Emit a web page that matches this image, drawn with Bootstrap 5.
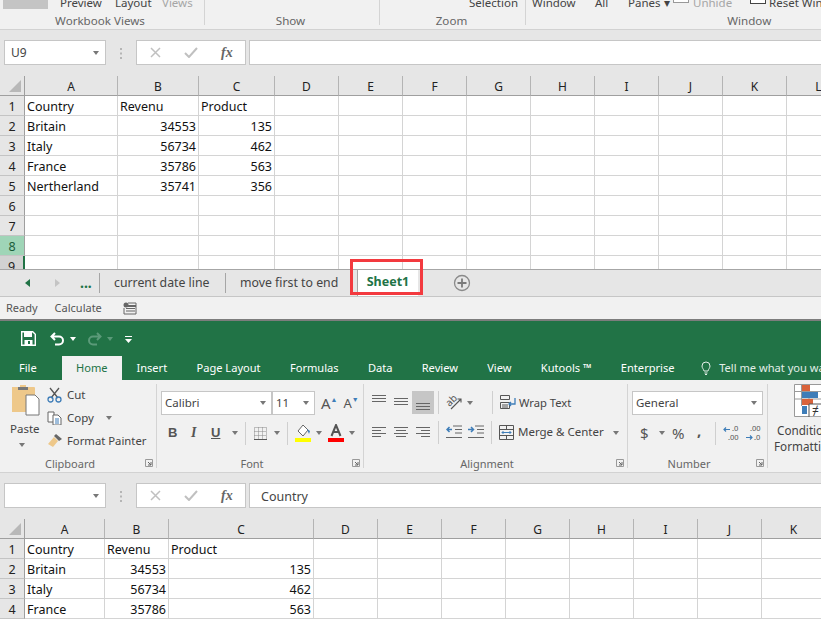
<!DOCTYPE html>
<html lang="en"><head><meta charset="utf-8"><title>Excel</title>
<link href="https://cdn.jsdelivr.net/npm/bootstrap@5.3.0/dist/css/bootstrap.min.css" rel="stylesheet">
<style>
html,body{margin:0;background:#f1f1f1;overflow:hidden}
body{width:821px;height:620px;position:relative;font-family:"Noto Sans","Liberation Sans",sans-serif;font-size:11.5px;color:#444;line-height:14px}
svg{display:block;flex:none}
.xl-stub{height:30px;background:#f1f1f1;border-bottom:1px solid #d2d2d2;overflow:hidden}
.xl-stubgroup{height:25px;border-right:1px solid #d4d4d4;flex:none}
.xl-stubgroup:last-child{border:0;flex:1}
.xl-stubtop{height:10px;margin-top:-4px;white-space:nowrap}
.xl-stubtop span{flex:none}
.xl-dim{color:#a6a6a6}
.xl-shotbox{width:45px;height:9px;background:#c4c4c4;margin:4px 12px 0 3px;flex:none}
.xl-chk{width:16px;height:8px;border:1px solid #999;border-top:0;margin-top:0;flex:none;background:#fff}
.xl-chk2{border-color:#444}
.xl-stublabel{margin-top:8px;text-align:center;color:#666;line-height:14px;font-size:11.6px}
.xl-band{background:#e6e6e6;padding:10px 0 10px 4px;height:46px}
.xl-name{width:102px;height:25px;background:#fff;border:1px solid #c6c6c6;padding:0 6px;line-height:23px;color:#444;font-size:12px}
.xl-grip{width:30px}
.xl-fx{width:110px;height:25px;background:#fff;border:1px solid #c6c6c6}
.xl-input{flex:1;height:25px;background:#fff;border:1px solid #c6c6c6;border-right:0;margin-left:3px;padding-left:11px;line-height:25px;font-size:12.5px;color:#444}
.xl-sheet{background:#fff;overflow:hidden}
.xl-sheet1{height:193px}
.xl-sheet2{height:101px}
.xl-table{table-layout:fixed;border-collapse:separate;border-spacing:0;font-size:12.5px;color:#111}
.xl-table th{background:#e6e6e6;font-weight:400;text-align:center;height:20px;padding:2px 0 0;border-right:1px solid #b4b4b4;border-bottom:1px solid #9f9f9f;color:#222;font-size:12px;line-height:17px}
.xl-table th.xl-rowh{border-right:1px solid #9f9f9f;border-bottom:1px solid #c4c4c4;font-size:12.5px}
.xl-table td{height:20px;padding:2px 2px 0;border-right:1px solid #d4d4d4;border-bottom:1px solid #d4d4d4;line-height:17px;white-space:nowrap;overflow:hidden}
.xl-table td.xl-num{text-align:right}
.xl-table th.xl-corner{position:relative;border-right-color:#9f9f9f}
.xl-corner svg{position:absolute;right:3px;bottom:3px}
.xl-table th.xl-r8{background:#9fd5b7;color:#1b5e3a}
.xl-table th.xl-r9{background:#d2d2d2;border-right:2px solid #217346}
.xl-tabs{height:28px;background:#e6e6e6;border-top:1px solid #a6a6a6;border-bottom:1px solid #c6c6c6;font-size:12.3px;color:#444;position:relative;white-space:nowrap}
.xl-tabsep{width:1px;height:20px;background:#a6a6a6;flex:none}
.xl-active{background:#fff;color:#217346;font-weight:700;width:61px;height:26px;border-left:1px solid #a6a6a6;text-align:center;line-height:24px;margin-left:16px;font-size:12.5px;flex:none}
.xl-status{height:22px;background:#f1f1f1;color:#555;font-size:11px;padding-left:6px}
.xl-divider{height:2px;background:#7d7d7d}
.xl-title{height:35px;background:#217346;padding-left:21px}
.xl-tabrow{height:24px;background:#217346;color:#fff;font-size:11.1px;line-height:24px;white-space:nowrap;overflow:hidden}
.xl-tabrow span{flex:none;padding:0 14.65px}
.xl-tabrow span.xl-file{padding:0 0 0 19px;margin-right:25px}
.xl-tabrow span.xl-home{background:#f1f1f1;color:#217346;padding:0;width:60px;text-align:center;margin-right:0}
.xl-tabrow span.xl-tell{padding:0;color:#e3efe8}
.xl-ribbon{height:93px;background:#f1f1f1;border-bottom:1px solid #d2d2d2;padding-top:4px;overflow:hidden}
.xl-group{height:84px;border-right:1px solid #d4d4d4;flex:none;position:relative;display:flex;flex-direction:column}
.xl-gbody{height:68px;flex:none}
.xl-glabel{text-align:center;color:#666;font-size:11px;line-height:14px;margin-top:5px}
.xl-launch{position:absolute;right:3px;bottom:1px}
.xl-combo{height:24px;background:#fff;border:1px solid #c6c6c6;line-height:22px;padding-left:3px;color:#444;font-size:11.5px;position:relative;flex:none}
.xl-caret{width:0;height:0;border-left:3.5px solid transparent;border-right:3.5px solid transparent;border-top:4px solid #777;flex:none}
.xl-combo .xl-caret{position:absolute;right:5px;top:9px}
.xl-vsep{width:1px;height:23px;background:#cfcfcf;flex:none}
.xl-sel{background:#c6c6c6;width:22px;height:23px;display:flex;align-items:flex-end;justify-content:center;padding-bottom:3px}
.xl-redbox{position:absolute;left:350px;top:259px;width:73px;height:36px;border:3px solid #f33a3f;pointer-events:none}
.xl-b{font-weight:700;font-family:"Liberation Sans",sans-serif;color:#555;font-size:13px;flex:none;line-height:16px}
.xl-i{font-style:italic;font-weight:700;font-family:"Liberation Serif",serif;color:#555;font-size:14px;flex:none}
.xl-u{text-decoration:underline;font-weight:700;font-family:"Liberation Sans",sans-serif;color:#555;font-size:13px;flex:none}
.xl-fxt{font-family:"Liberation Serif",serif;font-style:italic;font-weight:700;color:#666;font-size:14px}
</style></head>
<body>
<!-- window one -->
<div class="xl-stub d-flex">
  <div class="xl-stubgroup" style="width:205px">
    <div class="xl-stubtop d-flex"><i class="xl-shotbox"></i><span style="width:55px">Preview</span><span style="width:47px">Layout</span><span class="xl-dim">Views</span></div>
    <div class="xl-stublabel" style="padding-right:4px">Workbook Views</div>
  </div>
  <div class="xl-stubgroup" style="width:175px">
    <div class="xl-stubtop"></div>
    <div class="xl-stublabel" style="padding-right:3px">Show</div>
  </div>
  <div class="xl-stubgroup" style="width:146px">
    <div class="xl-stubtop d-flex justify-content-end"><span style="margin-right:7px">Selection</span></div>
    <div class="xl-stublabel" style="padding-right:2px">Zoom</div>
  </div>
  <div class="xl-stubgroup">
    <div class="xl-stubtop d-flex"><span style="margin-left:6px;width:63px">Window</span><span style="width:33px">All</span><span style="width:45px">Panes ▾</span><i class="xl-chk" style="margin-top:-1px"></i><span class="xl-dim" style="margin-left:4px;width:57px">Unhide</span><i class="xl-chk xl-chk2"></i><span style="margin-left:3px">Reset Win</span></div>
    <div class="xl-stublabel" style="padding-left:150px">Window</div>
  </div>
</div>
<div class="xl-band d-flex">
  <div class="xl-name d-flex justify-content-between align-items-center"><span>U9</span><i class="xl-caret"></i></div>
  <div class="xl-grip d-flex align-items-center justify-content-center"><svg width="3" height="11"><path d="M0 0h2v2H0zM0 4.500h2v2H0zM0 9h2v2H0z" fill="#b5b5b5"/></svg></div>
  <div class="xl-fx d-flex align-items-center">
    <svg width="11" height="11" style="margin-left:13px"><path d="M1 1l9 9M10 1l-9 9" stroke="#c0c0c0" stroke-width="1.500"/></svg>
    <svg width="14" height="11" style="margin-left:23px"><path d="M1 6l4 4 8-9" fill="none" stroke="#c0c0c0" stroke-width="2"/></svg>
    <span class="xl-fxt" style="margin-left:23px">fx</span>
  </div>
  <div class="xl-input"></div>
</div>
<div class="xl-sheet xl-sheet1">
<table class="xl-table" style="width:851px">
<colgroup><col style="width:25px"><col style="width:93px"><col style="width:81px"><col style="width:76px"><col style="width:64px"><col style="width:64px"><col style="width:64px"><col style="width:64px"><col style="width:64px"><col style="width:64px"><col style="width:64px"><col style="width:64px"><col style="width:64px"></colgroup>
<tr><th class="xl-corner"><svg width="12" height="12"><path d="M12 0v12H0z" fill="#b8b8b8"/></svg></th><th>A</th><th>B</th><th>C</th><th>D</th><th>E</th><th>F</th><th>G</th><th>H</th><th>I</th><th>J</th><th>K</th><th>L</th></tr>
<tr><th class="xl-rowh">1</th><td>Country</td><td>Revenu</td><td>Product</td><td></td><td></td><td></td><td></td><td></td><td></td><td></td><td></td><td></td></tr>
<tr><th class="xl-rowh">2</th><td>Britain</td><td class="xl-num">34553</td><td class="xl-num">135</td><td></td><td></td><td></td><td></td><td></td><td></td><td></td><td></td><td></td></tr>
<tr><th class="xl-rowh">3</th><td>Italy</td><td class="xl-num">56734</td><td class="xl-num">462</td><td></td><td></td><td></td><td></td><td></td><td></td><td></td><td></td><td></td></tr>
<tr><th class="xl-rowh">4</th><td>France</td><td class="xl-num">35786</td><td class="xl-num">563</td><td></td><td></td><td></td><td></td><td></td><td></td><td></td><td></td><td></td></tr>
<tr><th class="xl-rowh">5</th><td>Nertherland</td><td class="xl-num">35741</td><td class="xl-num">356</td><td></td><td></td><td></td><td></td><td></td><td></td><td></td><td></td><td></td></tr>
<tr><th class="xl-rowh">6</th><td></td><td></td><td></td><td></td><td></td><td></td><td></td><td></td><td></td><td></td><td></td><td></td></tr>
<tr><th class="xl-rowh">7</th><td></td><td></td><td></td><td></td><td></td><td></td><td></td><td></td><td></td><td></td><td></td><td></td></tr>
<tr><th class="xl-rowh xl-r8">8</th><td></td><td></td><td></td><td></td><td></td><td></td><td></td><td></td><td></td><td></td><td></td><td></td></tr>
<tr><th class="xl-rowh xl-r9">9</th><td></td><td></td><td></td><td></td><td></td><td></td><td></td><td></td><td></td><td></td><td></td><td></td></tr>
</table>
</div>
<div class="xl-tabs d-flex align-items-center">
  <svg style="margin-left:25px" width="6" height="8"><path d="M5 0v8L0 4z" fill="#217346"/></svg>
  <svg style="margin-left:24px" width="6" height="8"><path d="M0 0v8l5-4z" fill="#c4c4c4"/></svg>
  <b style="margin-left:19px;color:#217346;width:19px;flex:none;font-size:14px">...</b>
  <i class="xl-tabsep"></i>
  <span style="margin-left:14px;width:96px;flex:none">current date line</span>
  <i class="xl-tabsep" style="margin-left:15px"></i>
  <span style="margin-left:14px;width:101px;flex:none">move first to end</span>
  <span class="xl-active">Sheet1</span>
  <svg style="margin-left:35px" width="18" height="18"><circle cx="9" cy="9" r="7.500" fill="none" stroke="#8a8a8a" stroke-width="1.300"/><path d="M9 4.500v9M4.500 9h9" stroke="#7a7a7a" stroke-width="1.800"/></svg>
</div>
<div class="xl-status d-flex align-items-center">
  <span>Ready</span><span style="margin-left:17px">Calculate</span>
  <svg style="margin-left:21px" width="14" height="13"><circle cx="3" cy="3" r="2.500" fill="#666"/><path d="M5 1h8v11H1V6" fill="none" stroke="#666"/><path d="M3 6h9v1H3zM3 8.500h9v1H3z" fill="#666"/><path d="M5 3h8v2H5z" fill="#666"/></svg>
</div>
<div class="xl-divider"></div>
<!-- window two -->
<div class="xl-title d-flex align-items-center">
  <svg width="15" height="15"><path d="M0.700 0.700h11l2.600 2.600v11H0.700z" fill="none" stroke="#fff" stroke-width="1.400"/><path d="M3 1h8v5H3zM3.500 9h8v5h-8z" fill="#fff"/><path d="M7 10h2v3H7z" fill="#217346"/></svg>
  <svg style="margin-left:14px" width="15" height="14"><path d="M5 1L1.500 4.500 5 8M2 4.500h7a4 4 0 0 1 0 8H5" fill="none" stroke="#fff" stroke-width="2"/></svg>
  <i class="xl-caret" style="margin-left:5px;border-top-color:#fff"></i>
  <svg style="margin-left:11px" width="15" height="14"><path d="M10 1l3.500 3.500L10 8M13 4.500H6a4 4 0 0 0 0 8h4" fill="none" stroke="#5b9a79" stroke-width="2"/></svg>
  <i class="xl-caret" style="margin-left:5px;border-top-color:#5b9a79"></i>
  <svg style="margin-left:12px" width="7" height="8"><path d="M0 1h7v1H0zM0 4h7L3.500 8z" fill="#fff"/></svg>
</div>
<div class="xl-tabrow d-flex">
  <span class="xl-file">File</span><span class="xl-home">Home</span><span>Insert</span><span>Page Layout</span><span>Formulas</span><span>Data</span><span>Review</span><span>View</span><span>Kutools ™</span><span>Enterprise</span>
  <svg style="margin:5px 8px 0 12px" width="10" height="14"><path d="M3 10C2.500 8 1 7 1 5a4 4 0 0 1 8 0c0 2-1.500 3-2 5zM3.500 12h3M4 13.500h2" fill="none" stroke="#e3efe8"/></svg>
  <span class="xl-tell">Tell me what you want</span>
</div>
<div class="xl-ribbon d-flex">
  <!-- clipboard -->
  <div class="xl-group" style="width:157px">
    <div class="xl-gbody d-flex">
      <div style="width:47px;padding-left:10px;flex:none">
        <svg width="30" height="32"><path d="M2 3h8V1h6v2h8a1 1 0 0 1 1 1v24H2z" fill="#eec88a"/><path d="M8 3h10v3H8z" fill="#777"/><path d="M16 11h9l4 4v16H16z" fill="#fff" stroke="#777"/></svg>
        <div style="margin-top:6px;font-size:11.5px;color:#444">Paste</div>
        <i class="xl-caret d-block" style="margin:7px 0 0 9px"></i>
      </div>
      <div class="d-flex flex-column">
        <div class="d-flex align-items-center" style="height:22px"><svg width="15" height="16"><path d="M3 1l8 10M12 1L4 11" stroke="#555" stroke-width="1.300"/><circle cx="3.500" cy="12.500" r="2.500" fill="none" stroke="#3e7db8" stroke-width="1.300"/><circle cx="11.500" cy="12.500" r="2.500" fill="none" stroke="#3e7db8" stroke-width="1.300"/></svg><span style="margin-left:5px">Cut</span></div>
        <div class="d-flex align-items-center" style="height:24px"><svg width="15" height="14"><path d="M1 1h6l0 10H1z" fill="#fff" stroke="#666"/><path d="M6 4h5l3 3v7H6z" fill="#fff" stroke="#666"/><path d="M8 8h4M8 10h4M8 12h4" stroke="#3e7db8"/></svg><span style="margin-left:5px">Copy</span><i class="xl-caret" style="margin-left:12px"></i></div>
        <div class="d-flex align-items-center" style="height:21px"><svg width="16" height="15"><path d="M9 1l6 5-3 2-5-5z" fill="#666"/><path d="M7 4l4 4-5 6-5-3z" fill="#eec88a"/></svg><span style="margin-left:4px;white-space:nowrap;font-size:11.3px">Format Painter</span></div>
      </div>
    </div>
    <div class="xl-glabel" style="padding-right:16px">Clipboard</div>
    <svg class="xl-launch" width="8" height="8"><path d="M0.500 0.500h7v7M0.500 0.500v7h7" fill="none" stroke="#999"/><path d="M3 3l3 3M6 3v3H3" fill="none" stroke="#666"/></svg>
  </div>
  <!-- font -->
  <div class="xl-group" style="width:207px;padding-left:4px">
    <div class="xl-gbody">
      <div class="d-flex align-items-center" style="margin-top:7px;height:24px">
        <div class="xl-combo" style="width:111px">Calibri<i class="xl-caret"></i></div>
        <div class="xl-combo" style="width:43px">11<i class="xl-caret"></i></div>
        <span style="margin-left:6px;font-size:15px;color:#555;flex:none">A<sup style="color:#3e7db8;font-size:7px;top:-7px">▲</sup></span>
        <span style="margin-left:6px;font-size:13px;color:#555;flex:none">A<sup style="color:#3e7db8;font-size:7px;top:-6px">▼</sup></span>
      </div>
      <div class="d-flex align-items-center" style="margin-top:6px;height:24px;padding-left:6px">
        <span class="xl-b" style="width:22px;text-align:left;padding-left:1px">B</span><span class="xl-i" style="width:22px;padding-left:2px">I</span><span class="xl-u" style="width:21px">U</span><i class="xl-caret"></i>
        <i class="xl-vsep" style="margin-left:7px"></i>
        <svg style="margin-left:8px" width="13" height="13"><path d="M0.500 .5h12v12H.5zM.5 4.500h12M.5 8.500h12M4.500 .5v12M8.500 .5v12" fill="none" stroke="#888" stroke-dasharray="1 1"/><path d="M0 12.500h13" stroke="#555"/></svg>
        <i class="xl-caret" style="margin-left:7px"></i>
        <i class="xl-vsep" style="margin-left:7px"></i>
        <svg style="margin-left:7px" width="16" height="18"><path d="M8 1l5 5-5 6-5-5z" fill="#fff" stroke="#666"/><path d="M12 5l3 2-1 3z" fill="#3e7db8"/><path d="M0 14h16v4H0z" fill="#ff0"/></svg>
        <i class="xl-caret" style="margin-left:5px"></i>
        <svg style="margin-left:6px" width="16" height="18"><path d="M3.500 12L8 1l4.500 11M5 8h6" fill="none" stroke="#555" stroke-width="2"/><path d="M0 14h16v4H0z" fill="#f00"/></svg>
        <i class="xl-caret" style="margin-left:5px"></i>
      </div>
    </div>
    <div class="xl-glabel" style="padding-right:20px">Font</div>
    <svg class="xl-launch" width="8" height="8"><path d="M0.500 0.500h7v7M0.500 0.500v7h7" fill="none" stroke="#999"/><path d="M3 3l3 3M6 3v3H3" fill="none" stroke="#666"/></svg>
  </div>
  <!-- alignment -->
  <div class="xl-group" style="width:264px;padding-left:8px">
    <div class="xl-gbody">
      <div class="d-flex" style="margin-top:7px;height:24px">
        <svg width="14" height="23"><path d="M0 4.500h14M0 7.500h14M0 10.500h14" stroke="#666"/></svg>
        <svg style="margin-left:8px" width="14" height="23"><path d="M0 7.500h14M0 10.500h14M0 13.500h14" stroke="#666"/></svg>
        <div class="xl-sel" style="margin-left:4px"><svg width="14" height="9"><path d="M0 1.500h14M0 4.500h14M0 7.500h14" stroke="#666"/></svg></div>
        <i class="xl-vsep" style="margin-left:4px"></i>
        <svg style="margin-left:7px;margin-top:2px" width="17" height="19"><text transform="rotate(-45 7 9)" x="1" y="10" font-size="10" fill="#555" font-family="Noto Sans">ab</text><path d="M5 16L15 6M11.500 6H15v3.500" fill="none" stroke="#555" stroke-width="1.100"/></svg>
        <i class="xl-caret" style="margin:10px 0 0 4px"></i>
        <i class="xl-vsep" style="margin-left:19px"></i>
        <svg style="margin-left:7px;margin-top:4px" width="16" height="15"><path d="M.5 .5h9v4h-9zM.5 7.500h9v6h-9zM2 10h6M2 12h6" fill="none" stroke="#555"/><path d="M15 3v6H9M11 7l-2 2 2 2" fill="none" stroke="#3e7db8" stroke-width="1.300"/></svg>
        <span style="margin:5px 0 0 3px;white-space:nowrap;color:#444;font-size:11.2px">Wrap Text</span>
      </div>
      <div class="d-flex" style="margin-top:6px;height:24px">
        <svg width="14" height="23"><path d="M0 6.500h14M0 9.500h9M0 12.500h14M0 15.500h9" stroke="#666"/></svg>
        <svg style="margin-left:8px" width="14" height="23"><path d="M0 6.500h14M2 9.500h10M0 12.500h14M2 15.500h10" stroke="#666"/></svg>
        <svg style="margin-left:8px" width="14" height="23"><path d="M0 6.500h14M5 9.500h9M0 12.500h14M5 15.500h9" stroke="#666"/></svg>
        <i class="xl-vsep" style="margin-left:8px"></i>
        <svg style="margin-left:7px;margin-top:4px" width="16" height="14"><path d="M7 1h9M9 4.500h7M9 8h7M0 12.500h16" stroke="#666"/><path d="M6 4.500H1M3.500 2L1 4.500 3.500 7" fill="none" stroke="#3e7db8" stroke-width="1.500"/></svg>
        <svg style="margin-left:6px;margin-top:4px" width="16" height="14"><path d="M7 1h9M9 4.500h7M9 8h7M0 12.500h16" stroke="#666"/><path d="M0 4.500h5M3 2l2.500 2.500L3 7" fill="none" stroke="#3e7db8" stroke-width="1.500"/></svg>
        <i class="xl-vsep" style="margin-left:7px"></i>
        <svg style="margin-left:7px;margin-top:4px" width="15" height="15"><path d="M.5 .5h14v14H.5zM.5 4.500h14M.5 10.500h14M7.500 .5v4M7.500 10.500v4" fill="none" stroke="#555"/><path d="M3 7.500h9M4.500 6L3 7.500 4.500 9M10.500 6L12 7.500 10.500 9" fill="none" stroke="#3e7db8"/></svg>
        <span style="margin:4px 0 0 4px;white-space:nowrap;color:#444">Merge &amp; Center</span>
        <i class="xl-caret" style="margin:10px 0 0 9px"></i>
      </div>
    </div>
    <div class="xl-glabel" style="padding-right:25px">Alignment</div>
    <svg class="xl-launch" width="8" height="8"><path d="M0.500 0.500h7v7M0.500 0.500v7h7" fill="none" stroke="#999"/><path d="M3 3l3 3M6 3v3H3" fill="none" stroke="#666"/></svg>
  </div>
  <!-- number -->
  <div class="xl-group" style="width:140px;padding-left:4px">
    <div class="xl-gbody">
      <div class="d-flex" style="margin-top:7px;height:24px"><div class="xl-combo" style="width:131px">General<i class="xl-caret"></i></div></div>
      <div class="d-flex align-items-center" style="margin-top:6px;height:24px">
        <span style="margin-left:8px;font-size:15px;color:#555;width:13px;flex:none">$</span><i class="xl-caret" style="margin-left:6px"></i>
        <span style="margin-left:7px;font-size:15px;color:#555;width:20px;flex:none">%</span>
        <span style="margin-left:5px;margin-top:-6px;font-size:15px;color:#555;font-weight:700;width:12px;flex:none;line-height:10px">,</span>
        <i class="xl-vsep" style="margin-left:6px"></i>
        <svg style="margin-left:7px" width="18" height="18"><path d="M1 5.500h6M3 3.500L1 5.500l2 2" fill="none" stroke="#3e7db8" stroke-width="1.200"/><text x="9" y="7" font-size="7.500" fill="#555" font-family="Noto Sans">.0</text><text x="5" y="16" font-size="7.500" fill="#555" font-family="Noto Sans">.00</text></svg>
        <svg style="margin-left:4px" width="18" height="18"><text x="5" y="7" font-size="7.500" fill="#555" font-family="Noto Sans">.00</text><path d="M1 13.500h6M5 11.500l2 2-2 2" fill="none" stroke="#3e7db8" stroke-width="1.200"/><text x="9" y="16" font-size="7.500" fill="#555" font-family="Noto Sans">.0</text></svg>
      </div>
    </div>
    <div class="xl-glabel" style="padding-right:21px">Number</div>
    <svg class="xl-launch" width="8" height="8"><path d="M0.500 0.500h7v7M0.500 0.500v7h7" fill="none" stroke="#999"/><path d="M3 3l3 3M6 3v3H3" fill="none" stroke="#666"/></svg>
  </div>
  <!-- styles -->
  <div style="padding-left:6px;flex:none;width:53px;overflow:hidden">
    <svg style="margin-left:20px" width="33" height="33"><path d="M.5 .5h32v32H.5z" fill="#fff" stroke="#999"/><path d="M7.500 0v22M15 0v22M.5 7.500h32M.5 15h32" stroke="#999"/><path d="M8 1h8v6H8z" fill="#d9633b"/><path d="M8 8h16v6H8z" fill="#3e7db8"/><path d="M8 15h11v6H8z" fill="#d9633b"/><path d="M8 22h5v8H8z" fill="#3e7db8"/><path d="M15 20h18v13H15z" fill="#fff" stroke="#555"/><text x="18" y="31" font-size="12" fill="#333">≠</text></svg>
    <div style="white-space:nowrap;margin:6px 0 0 3px;color:#444;font-size:11.7px">Conditional</div>
    <div style="white-space:nowrap;margin-top:2px;color:#444;font-size:11.7px">Formatting</div>
  </div>
</div>
<div class="xl-band d-flex">
  <div class="xl-name d-flex justify-content-end align-items-center"><i class="xl-caret"></i></div>
  <div class="xl-grip d-flex align-items-center justify-content-center"><svg width="3" height="11"><path d="M0 0h2v2H0zM0 4.500h2v2H0zM0 9h2v2H0z" fill="#b5b5b5"/></svg></div>
  <div class="xl-fx d-flex align-items-center">
    <svg width="11" height="11" style="margin-left:13px"><path d="M1 1l9 9M10 1l-9 9" stroke="#c0c0c0" stroke-width="1.500"/></svg>
    <svg width="14" height="11" style="margin-left:23px"><path d="M1 6l4 4 8-9" fill="none" stroke="#c0c0c0" stroke-width="2"/></svg>
    <span class="xl-fxt" style="margin-left:23px">fx</span>
  </div>
  <div class="xl-input">Country</div>
</div>
<div class="xl-sheet xl-sheet2">
<table class="xl-table" style="width:826px">
<colgroup><col style="width:25px"><col style="width:80px"><col style="width:64px"><col style="width:145px"><col style="width:64px"><col style="width:64px"><col style="width:64px"><col style="width:64px"><col style="width:64px"><col style="width:64px"><col style="width:64px"><col style="width:64px"></colgroup>
<tr><th class="xl-corner"><svg width="12" height="12"><path d="M12 0v12H0z" fill="#b8b8b8"/></svg></th><th>A</th><th>B</th><th>C</th><th>D</th><th>E</th><th>F</th><th>G</th><th>H</th><th>I</th><th>J</th><th>K</th></tr>
<tr><th class="xl-rowh">1</th><td>Country</td><td>Revenu</td><td>Product</td><td></td><td></td><td></td><td></td><td></td><td></td><td></td><td></td></tr>
<tr><th class="xl-rowh">2</th><td>Britain</td><td class="xl-num">34553</td><td class="xl-num">135</td><td></td><td></td><td></td><td></td><td></td><td></td><td></td><td></td></tr>
<tr><th class="xl-rowh">3</th><td>Italy</td><td class="xl-num">56734</td><td class="xl-num">462</td><td></td><td></td><td></td><td></td><td></td><td></td><td></td><td></td></tr>
<tr><th class="xl-rowh">4</th><td>France</td><td class="xl-num">35786</td><td class="xl-num">563</td><td></td><td></td><td></td><td></td><td></td><td></td><td></td><td></td></tr>
</table>
</div>
<div class="xl-redbox"></div>
<script src="https://cdn.jsdelivr.net/npm/bootstrap@5.3.0/dist/js/bootstrap.bundle.min.js"></script>
</body></html>
